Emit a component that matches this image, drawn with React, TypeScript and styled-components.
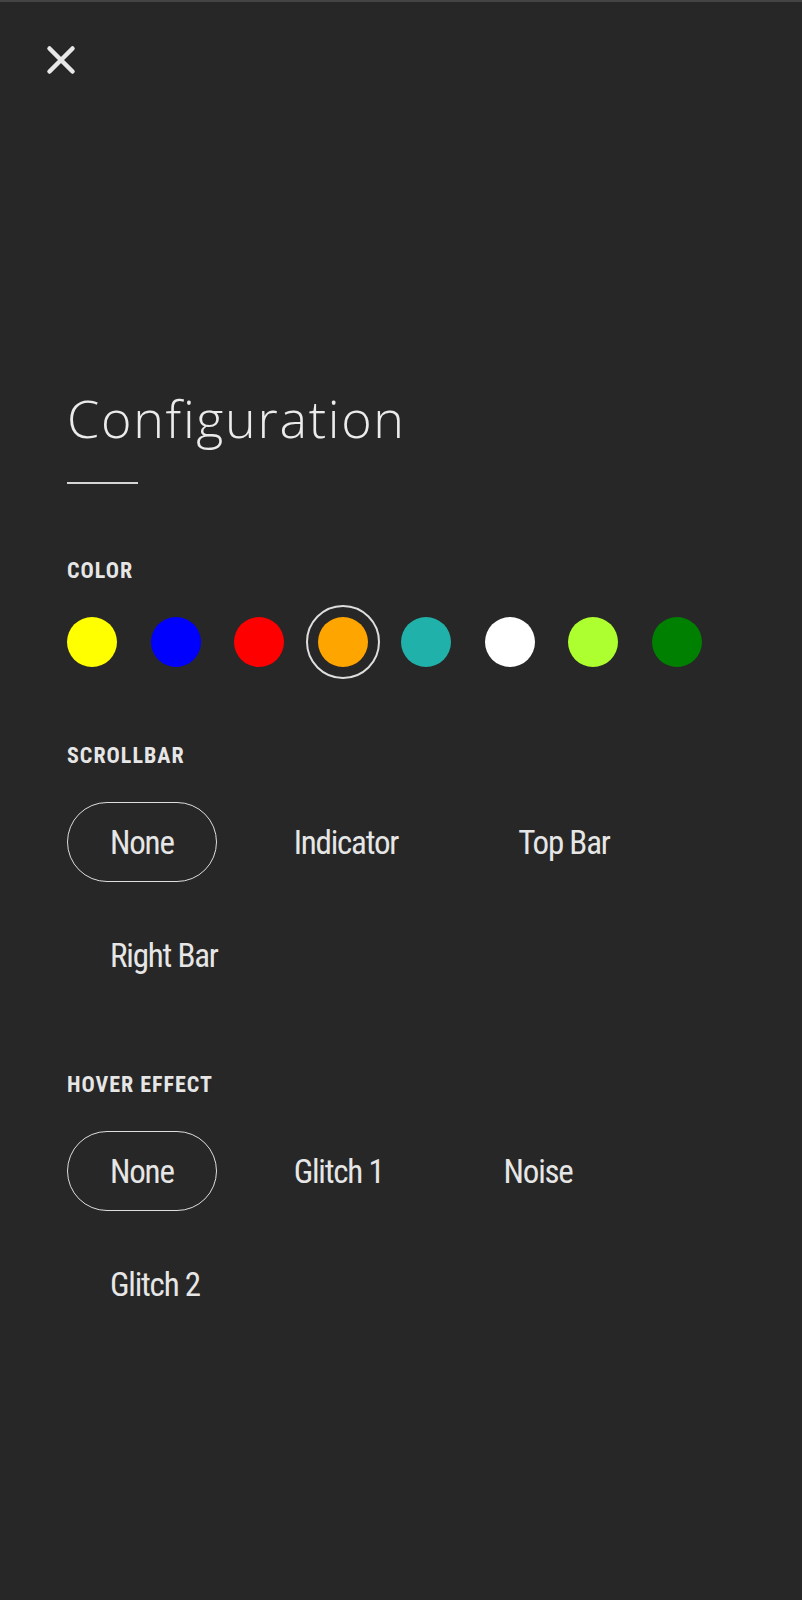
import React, { useState } from "react";
import styled, { createGlobalStyle, css } from "styled-components";

const GlobalStyle = createGlobalStyle`
  html, body {
    margin: 0;
    padding: 0;
    background: #272727;
  }
  body {
    font-family: "Open Sans", sans-serif;
    color: #e6e6e6;
  }
  * { box-sizing: border-box; }
`;

const Page = styled.div`
  min-height: 1600px;
  background: #272727;
  border-top: 2px solid #444444;
`;

const TopBar = styled.header`
  display: flex;
  align-items: center;
  padding: 42px 0 0 46px;
  height: 74px;
`;

const CloseButton = styled.button`
  width: 30px;
  height: 30px;
  padding: 0;
  border: none;
  background: transparent;
  cursor: pointer;
  display: flex;
  align-items: center;
  justify-content: center;
`;

const Content = styled.main`
  padding: 312px 67px 0 67px;
`;

const Title = styled.h1`
  margin: 0;
  font-family: "Open Sans", sans-serif;
  font-weight: 300;
  font-size: 52px;
  line-height: 60px;
  letter-spacing: 1.7px;
  color: #ebebeb;
`;

const Rule = styled.div`
  width: 71px;
  height: 2px;
  background: #d6d6d6;
  margin-top: 34px;
`;

const Section = styled.section<{ $gap: number }>`
  margin-top: ${(p) => p.$gap}px;
`;

const condensed = css`
  font-family: "Roboto", sans-serif;
  font-stretch: 75%;
`;

const Label = styled.h2`
  ${condensed};
  margin: 0 0 34px 0;
  font-size: 22px;
  font-weight: 700;
  line-height: 24px;
  letter-spacing: 1px;
  text-transform: uppercase;
  color: #e6e6e6;
`;

const Swatches = styled.div`
  display: flex;
  gap: 33.5px;
`;

const Swatch = styled.button<{ $color: string; $active?: boolean }>`
  width: 50px;
  height: 50px;
  padding: 0;
  border: none;
  border-radius: 50%;
  background: ${(p) => p.$color};
  cursor: pointer;
  outline: ${(p) => (p.$active ? "2px solid #dedede" : "none")};
  outline-offset: 10px;
`;

const Options = styled.div`
  display: flex;
  flex-wrap: wrap;
  gap: 33px 34px;
`;

const Option = styled.button<{ $active?: boolean }>`
  ${condensed};
  height: 80px;
  padding: 0 42px;
  border-radius: 40px;
  border: 1.5px solid ${(p) => (p.$active ? "#dedede" : "transparent")};
  background: transparent;
  color: #e6e6e6;
  font-size: 33px;
  font-weight: 400;
  letter-spacing: -1.2px;
  cursor: pointer;
  white-space: nowrap;
`;

const colors = [
  "#ffff00",
  "#0000ff",
  "#ff0000",
  "#ffa500",
  "#20b2aa",
  "#ffffff",
  "#adff2f",
  "#008000",
];

const scrollbarOptions = ["None", "Indicator", "Top Bar", "Right Bar"];
const hoverOptions = ["None", "Glitch 1", "Noise", "Glitch 2"];

export default function App() {
  const [color, setColor] = useState(3);
  const [scrollbar, setScrollbar] = useState(0);
  const [hover, setHover] = useState(0);

  return (
    <>
      <GlobalStyle />
      <Page>
        <TopBar>
          <CloseButton aria-label="Close">
            <svg width="30" height="30" viewBox="0 0 30 30">
              <path
                d="M3.5 3.5 L26.5 26.5 M26.5 3.5 L3.5 26.5"
                stroke="#e8e8e8"
                strokeWidth="4.5"
                strokeLinecap="round"
              />
            </svg>
          </CloseButton>
        </TopBar>
        <Content>
          <Title>Configuration</Title>
          <Rule />
          <Section $gap={75}>
            <Label>Color</Label>
            <Swatches>
              {colors.map((c, i) => (
                <Swatch
                  key={c}
                  $color={c}
                  $active={i === color}
                  onClick={() => setColor(i)}
                  aria-label={c}
                />
              ))}
            </Swatches>
          </Section>
          <Section $gap={77}>
            <Label>Scrollbar</Label>
            <Options>
              {scrollbarOptions.map((o, i) => (
                <Option
                  key={o}
                  $active={i === scrollbar}
                  onClick={() => setScrollbar(i)}
                >
                  {o}
                </Option>
              ))}
            </Options>
          </Section>
          <Section $gap={78}>
            <Label>Hover Effect</Label>
            <Options>
              {hoverOptions.map((o, i) => (
                <Option
                  key={o}
                  $active={i === hover}
                  onClick={() => setHover(i)}
                >
                  {o}
                </Option>
              ))}
            </Options>
          </Section>
        </Content>
      </Page>
    </>
  );
}
